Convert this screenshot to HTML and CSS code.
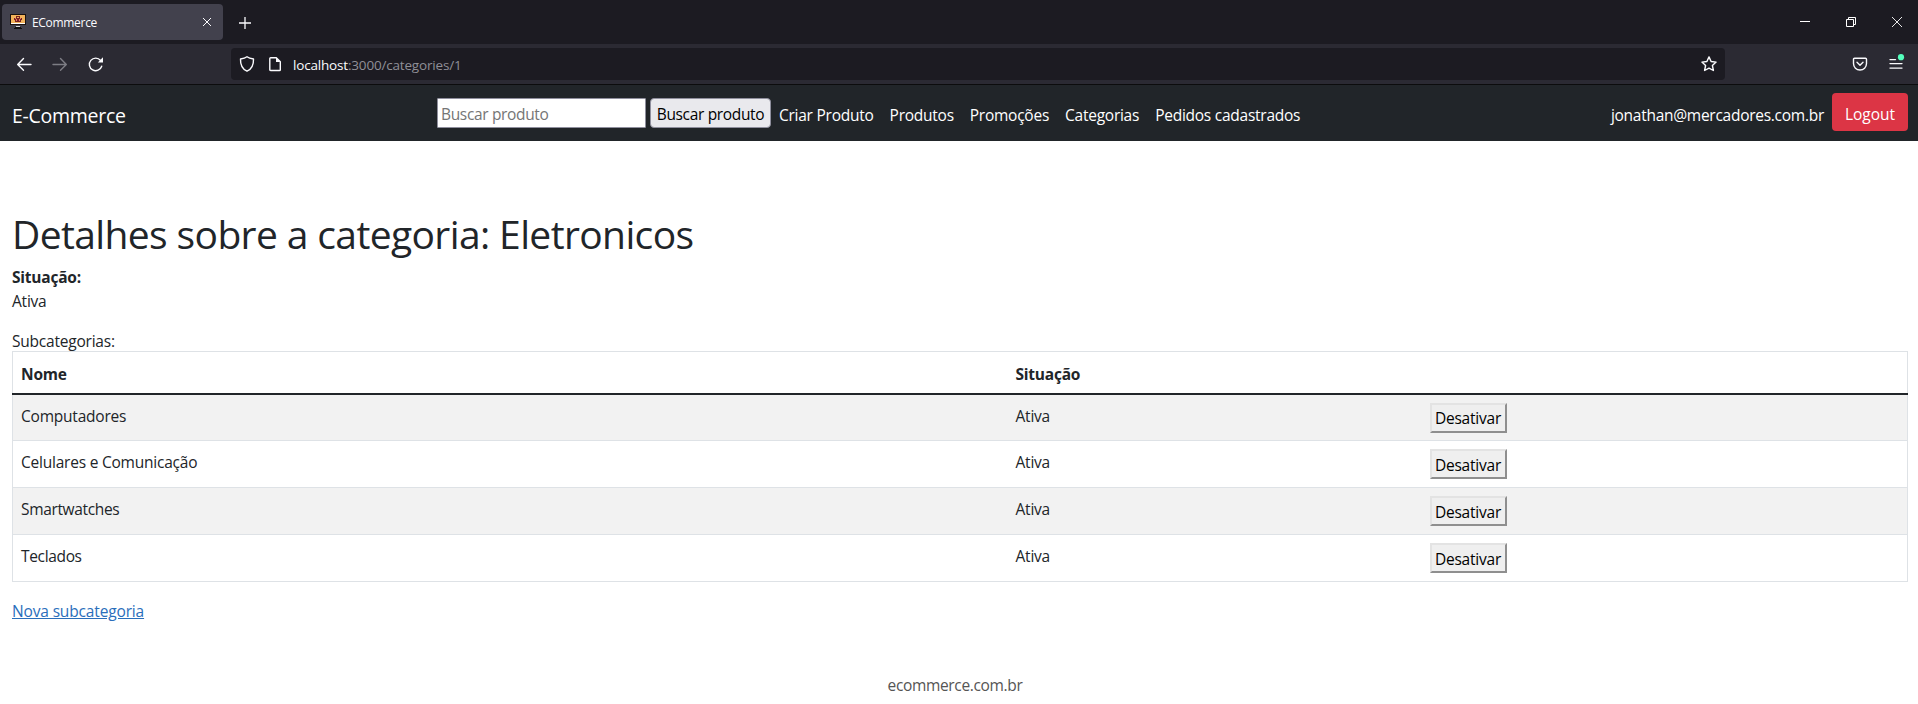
FILE: index.html
```html
<!DOCTYPE html>
<html lang="pt-BR">
<head>
<meta charset="utf-8">
<title>ECommerce</title>
<link rel="stylesheet" href="styles.css">
</head>
<body>
<header class="browser">
  <div class="tabbar">
    <div class="tab">
      <svg class="favicon" width="16" height="16" viewBox="0 0 16 16"><path d="M0 0h16v11H0z" fill="#1a1210"/><path d="M1 1h14v8H1z" fill="#f2b25a"/><path d="M1 9h14v1H1z" fill="#fff"/><path d="M6 12h4v1H6z" fill="#ddd"/><path d="M5 13h6v1h1v1H4v-1h1z" fill="#111"/><path d="M4 4h2V2h4v2h2v2h-1v2H5V6H4z" fill="#7a2320"/><path d="M7 3h2v1H7z" fill="#f2b25a"/><path d="M6 5h1v2H6zM9 5h1v2H9zM5 4h1v1H5zM10 4h1v1h-1z" fill="#e8776a"/></svg>
      <span class="tab-title">ECommerce</span>
      <svg class="tab-close" width="8" height="8" viewBox="0 0 8 8"><path d="M0 0l8 8M8 0L0 8" stroke="#fbfbfe" stroke-width="1" fill="none"/></svg>
    </div>
    <svg class="new-tab" width="12" height="12" viewBox="0 0 12 12"><path d="M6 0v12M0 6h12" stroke="#fbfbfe" stroke-width="1.3"/></svg>
    <div class="window-buttons">
      <svg width="10" height="10" viewBox="0 0 10 10"><path d="M0 4.500h10" stroke="#fff"/></svg>
      <svg width="10" height="10" viewBox="0 0 10 10"><path d="M.5 2.500h7v7h-7zM2.500 2.500V.5h7v7h-2" stroke="#fff" fill="none"/></svg>
      <svg width="10" height="10" viewBox="0 0 10 10"><path d="M0 0l10 10M10 0L0 10" stroke="#fff" stroke-width=".9"/></svg>
    </div>
  </div>
  <div class="toolbar">
    <div class="history">
      <svg width="16" height="16" viewBox="0 0 16 16"><path d="M15 8.500H2M7.500 2.500L1.700 8.500l5.800 5.800" class="line"/></svg>
      <svg class="disabled" width="16" height="16" viewBox="0 0 16 16"><path d="M1 8.500h13M8.500 2.500l5.800 6-5.800 5.800" class="line"/></svg>
      <svg width="16" height="16" viewBox="0 0 16 16"><path d="M13.700 10.200A6.300 6.300 0 1 1 12.600 4.500" class="line"/><path d="M15 1.300v5.200H9.800z" fill="#fbfbfe"/></svg>
    </div>
    <div class="urlbar">
      <svg width="16" height="16" viewBox="0 0 16 16"><path d="M8 .8c2 1.500 4.300 1.900 6.500 2.200.2 5.500-1.500 10-6.500 12.200C3 13 1.300 8.500 1.500 3 3.700 2.700 6 2.300 8 .8z" class="line"/></svg>
      <svg class="page-icon" width="14" height="16" viewBox="0 0 14 16"><path d="M2.700 1.700h5.600l4 4v8q0 .8-.8.8H2.700q-.9 0-.9-.8V2.500q0-.8.9-.8z" class="line"/><path d="M8 1.500l4.500 4.500H8z" fill="#fbfbfe"/></svg>
      <span class="url"><b>localhost</b>:3000/categories/1</span>
      <svg class="star" width="16" height="16" viewBox="0 0 16 16"><path d="M8 .9l2.100 4.600 5 .6-3.700 3.400 1 5L8 12.200l-4.400 2.300 1-5L.9 6.100l5-.6z" class="line"/></svg>
    </div>
    <div class="actions">
      <svg width="16" height="16" viewBox="0 0 16 16"><path d="M2.500 2.200h11q1 0 1 1V7.500c0 3.700-2.900 6.500-6.500 6.500S1.500 11.200 1.500 7.500V3.200q0-1 1-1zM5 6.200l3 3 3-3" class="line"/></svg>
      <svg width="16" height="16" viewBox="0 0 16 16"><path d="M2 3.600h5.500M2 7.600h12M2 12.100h12" class="line"/><circle cx="13" cy="1.200" r="3.100" fill="#54ffbd"/></svg>
    </div>
  </div>
</header>
<nav class="navbar">
  <a class="brand">E-Commerce</a>
  <form class="search">
    <input class="search-input" type="text" placeholder="Buscar produto">
    <button class="search-button" type="button">Buscar produto</button>
  </form>
  <div class="links">
    <a>Criar Produto</a>
    <a>Produtos</a>
    <a>Promoções</a>
    <a>Categorias</a>
    <a>Pedidos cadastrados</a>
  </div>
  <span class="user">jonathan@mercadores.com.br</span>
  <button class="logout" type="button">Logout</button>
</nav>
<main class="content">
  <h1>Detalhes sobre a categoria: Eletronicos</h1>
  <p class="status"><strong>Situação:</strong><br>Ativa</p>
  <div class="caption">Subcategorias:</div>
  <table class="table">
    <colgroup><col class="col-name"><col class="col-status"><col></colgroup>
    <thead><tr><th>Nome</th><th>Situação</th><th></th></tr></thead>
    <tbody>
      <tr><td>Computadores</td><td>Ativa</td><td><button class="toggle" type="button">Desativar</button></td></tr>
      <tr><td>Celulares e Comunicação</td><td>Ativa</td><td><button class="toggle" type="button">Desativar</button></td></tr>
      <tr><td class="tight">Smartwatches</td><td>Ativa</td><td><button class="toggle" type="button">Desativar</button></td></tr>
      <tr><td class="tight">Teclados</td><td>Ativa</td><td><button class="toggle" type="button">Desativar</button></td></tr>
    </tbody>
  </table>
  <a class="new-link">Nova subcategoria</a>
</main>
<footer class="footer">ecommerce.com.br</footer>
</body>
</html>
```
FILE: styles.css
```css
* { box-sizing: border-box; }
body {
  margin: 0;
  height: 704px;
  overflow: hidden;
  background: #fff;
  color: #212529;
  font: 15.5px/24px "Open Sans", "Noto Sans", sans-serif;
  letter-spacing: -.22px;
}
svg { display: block; flex: none; overflow: visible; }
input, button { font: inherit; letter-spacing: inherit; }
.line { fill: none; stroke: #fbfbfe; stroke-width: 1.4; stroke-linecap: round; stroke-linejoin: round; }

.browser { border-bottom: 1px solid #0c0c0d; color: #fbfbfe; }
.tabbar { display: flex; align-items: center; height: 44px; padding-left: 2px; background: #1c1b22; }
.tab { display: flex; align-items: center; width: 221px; height: 36px; padding: 0 12px 0 8px; border-radius: 4px; background: #42414d; }
.favicon { margin: -1px 6px 0 0; }
.tab-title { padding-top: 2px; font-size: 12px; letter-spacing: -.31px; }
.tab-close { margin-left: auto; }
.new-tab { margin: 2px 0 0 16px; }
.window-buttons { display: flex; gap: 36px; margin-left: auto; padding-right: 16px; }
.toolbar { display: flex; align-items: center; height: 40px; background: #2b2a33; }
.history { display: flex; gap: 20px; width: 231px; padding-left: 16px; }
.disabled { opacity: .4; }
.urlbar { display: flex; align-items: center; width: 1494px; height: 32px; padding: 0 8px; border-radius: 4px; background: #1c1b22; }
.page-icon { margin: 0 11px 0 13px; }
.url { padding-top: 2px; color: #8f8f97; font-size: 13.5px; letter-spacing: -.18px; }
.url b { color: #fbfbfe; font-weight: 400; }
.star { margin-left: auto; }
.actions { display: flex; gap: 20px; margin-left: auto; padding-right: 14px; }

.navbar { display: flex; align-items: center; height: 56px; padding: 0 10px 0 12px; background: #212529; color: #fff; }
.brand { width: 425px; padding-top: 5px; font-size: 19.5px; line-height: 30px; letter-spacing: -.28px; }
.search { display: flex; gap: 4px; }
.search-input { width: 209px; height: 30px; padding: 2px 3px 0; border: 1px solid #8f8f9d; border-radius: 1px; letter-spacing: -.34px; }
.search-input::placeholder { color: #757575; }
.search-button { width: 121px; height: 30px; padding: 2px 0 0; border: 1px solid #8f8f9d; border-radius: 4px; background: #e9e9ed; color: #000; letter-spacing: -.34px; }
.links { display: flex; gap: 16px; margin-left: 8px; padding-top: 3px; letter-spacing: -.25px; }
.user { margin-left: auto; padding-top: 3px; letter-spacing: -.27px; }
.logout { width: 76px; height: 38px; margin: -2px 0 0 8px; padding: 3px 0 0; border: 0; border-radius: 4px; background: #dc3545; color: #fff; letter-spacing: 0; }

.content { padding: 69px 10px 0 12px; }
h1 { margin: 0 0 7px; font-size: 39px; font-weight: 400; line-height: 48px; letter-spacing: -.62px; }
.status { margin: 0 0 16px; }
.caption { margin-bottom: -2px; }
.table { width: 100%; margin-bottom: 17px; border: 1px solid #dee2e6; border-collapse: collapse; table-layout: fixed; }
.col-name { width: 995px; }
.col-status { width: 414px; }
.table th, .table td { padding: 9px 8px 6px; text-align: left; vertical-align: top; }
.table th { height: 42px; padding-top: 10px; }
.table td { height: 47px; border-top: 1px solid #dee2e6; }
.table td.tight { letter-spacing: -.34px; }
.table td:last-child { padding-top: 8px; }
.table thead { border-bottom: 2px solid #212529; }
.table tbody tr:nth-child(odd) { background: #f2f2f2; }
.toggle { display: block; width: 77px; height: 30px; padding: 1px 0 0; border: 2px outset #e3e3e3; background: #efefef; color: #000; }
.new-link { color: #2a6ebb; text-decoration: underline; letter-spacing: -.15px; }
.footer { padding: 50px 8px 0 0; text-align: center; color: #555; letter-spacing: -.34px; }
```
